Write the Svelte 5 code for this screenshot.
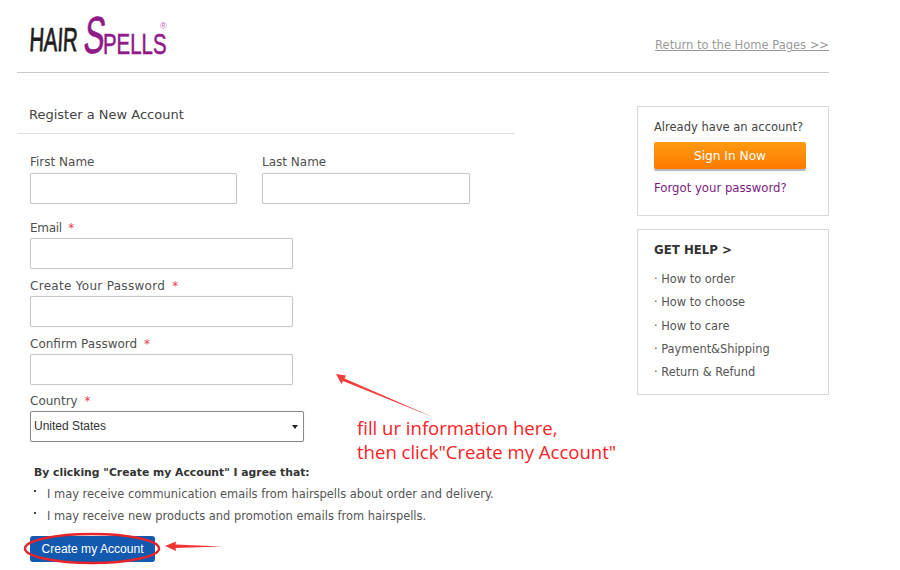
<script>
	const help = ['How to order', 'How to choose', 'How to care', 'Payment&Shipping', 'Return & Refund'];
	const agreements = [
		'I may receive communication emails from hairspells about order and delivery.',
		'I may receive new products and promotion emails from hairspells.'
	];
	const fields = [
		{ label: 'Email', spacing: 'tight' },
		{ label: 'Create Your Password', spacing: 'wide' },
		{ label: 'Confirm Password', spacing: '' }
	];
</script>

<div class="page">
	<header>
		<div class="logo" aria-label="HairSpells">
			<span class="hair">HAIR</span>
			<span class="big-s">S</span>
			<span class="pells">PELLS</span>
			<span class="reg">®</span>
		</div>
		<a href="#home" class="home">Return to the Home Pages &gt;&gt;</a>
	</header>

	<main>
		<section class="register">
			<h1>Register a New Account</h1>
			<form>
				<div class="names">
					<div>
						<label for="first">First Name</label>
						<input id="first" />
					</div>
					<div>
						<label for="last">Last Name</label>
						<input id="last" />
					</div>
				</div>
				{#each fields as f}
					<div class="field">
						<label for={f.label} class={f.spacing}>{f.label} <em>*</em></label>
						<input id={f.label} class="long" />
					</div>
				{/each}
				<div class="field country">
					<label for="country">Country <em>*</em></label>
					<div id="country" class="select">United States<span class="caret"></span></div>
				</div>
				<div class="agree">
					<strong>By clicking "Create my Account" I agree that:</strong>
					<ul>
						{#each agreements as a}
							<li>{a}</li>
						{/each}
					</ul>
				</div>
				<button type="button" class="create">Create my Account</button>
			</form>
		</section>

		<aside>
			<div class="box signin">
				<p>Already have an account?</p>
				<button type="button" class="orange">Sign In Now</button>
				<a href="#forgot">Forgot your password?</a>
			</div>
			<div class="box help">
				<h2>GET HELP &gt;</h2>
				<ul>
					{#each help as h}
						<li>· {h}</li>
					{/each}
				</ul>
			</div>
		</aside>
	</main>

	<div class="note">fill ur information here,<br />then click"Create my Account"</div>
	<svg class="marks" width="900" height="570" viewBox="0 0 900 570" aria-hidden="true">
		<path d="M336 374 L346 375.500 L344.500 378.500 L435 418 L343 381 L341.500 384 Z" fill="#f33c3c" />
		<path d="M165 546 L176 541.500 L175.500 544.500 L222 546.500 L175.500 548 L176 551 Z" fill="#f03434" />
		<ellipse cx="92" cy="548.500" rx="67" ry="14.500" fill="none" stroke="#e5242c" stroke-width="2.500" />
	</svg>
</div>

<style>
	:global(body) {
		margin: 0;
		background: #fff;
	}

	.page {
		position: relative;
		width: 900px;
		height: 570px;
		overflow: hidden;
		font-family: 'DejaVu Sans', Verdana, sans-serif;
		font-size: 12px;
		color: #4a4a4a;
		box-sizing: border-box;
		padding-left: 17px;
	}

	header {
		width: 812px;
		height: 73px;
		box-sizing: border-box;
		border-bottom: 1px solid #c9c9c9;
		display: flex;
		justify-content: space-between;
		padding-left: 12px;
	}

	.logo {
		position: relative;
		display: flex;
		align-items: flex-end;
		width: 142px;
		height: 56px;
		font-family: 'Liberation Sans', sans-serif;
		white-space: nowrap;
	}

	.logo span {
		display: block;
	}

	.hair {
		width: 53px;
		line-height: 24px;
		font-size: 33px;
		color: #1d1d1d;
		-webkit-text-stroke: 0.9px #1d1d1d;
		transform: scaleX(0.61) skewX(-5deg);
		transform-origin: left bottom;
		margin-bottom: 4px;
	}

	.big-s {
		width: 21px;
		line-height: 38px;
		font-size: 52px;
		color: #8f1a88;
		-webkit-text-stroke: 0.7px #8f1a88;
		transform: scaleX(0.6) skewX(-12deg);
		transform-origin: left bottom;
		margin-bottom: 2px;
	}

	.pells {
		width: 64px;
		line-height: 22px;
		font-size: 30px;
		color: #8f1a88;
		-webkit-text-stroke: 0.6px #8f1a88;
		transform: scaleX(0.68);
		transform-origin: left bottom;
		margin-bottom: 1px;
	}

	.reg {
		position: absolute;
		left: 131px;
		top: 21px;
		line-height: 10px;
		font-size: 9px;
		color: #c060b8;
	}

	.home {
		font-size: 11.500px;
		color: #9a9a9a;
		margin-top: 38px;
		height: 15px;
		line-height: 15px;
	}

	main {
		display: flex;
		justify-content: space-between;
		width: 812px;
		padding-top: 33px;
	}

	.register {
		width: 498px;
	}

	h1 {
		margin: 0;
		padding: 0 0 0 12px;
		height: 27px;
		line-height: 18px;
		font-size: 13px;
		font-weight: 400;
		color: #444;
		border-bottom: 1px solid #e0e0e0;
	}

	form {
		padding: 20px 0 0 13px;
	}

	.names {
		display: grid;
		grid-template-columns: 207px 208px;
		gap: 25px;
		margin-bottom: 16px;
	}

	.names label {
		height: 19px;
	}

	.names input {
		width: 100%;
	}

	label {
		display: block;
		height: 18px;
		line-height: 16px;
		font-size: 12px;
		color: #505050;
	}

	label.wide {
		letter-spacing: 0.3px;
	}

	label.tight {
		letter-spacing: -0.3px;
	}

	em {
		color: #e8404a;
		font-style: normal;
		margin-left: 3px;
	}

	input,
	.select {
		display: block;
		box-sizing: border-box;
		height: 31px;
		background: #fff;
		border: 1px solid #c8c8c8;
		border-radius: 2px;
		box-shadow: 0 0 1px #ccc;
		padding: 0;
	}

	.long {
		width: 263px;
	}

	.field {
		margin-bottom: 9px;
	}

	.country {
		margin-top: -1px;
		margin-bottom: 0;
	}

	.select {
		position: relative;
		width: 274px;
		border-color: #8a8a8a;
		font-family: 'Liberation Sans', Arial, sans-serif;
		font-size: 12px;
		line-height: 29px;
		padding-left: 3px;
		color: #333;
	}

	.caret {
		position: absolute;
		right: 5px;
		top: 13px;
		border: 3px solid transparent;
		border-top: 4px solid #222;
		border-bottom: 0;
	}

	.agree {
		padding: 24px 0 0 4px;
		font-size: 11.450px;
	}

	.agree strong {
		display: block;
		height: 17px;
		line-height: 14px;
		font-size: 10.800px;
		color: #333;
	}

	.agree ul {
		list-style: none;
		margin: 0;
		padding: 0;
	}

	.agree li {
		height: 22px;
		line-height: 22px;
		padding-left: 13px;
		position: relative;
		color: #555;
	}

	.agree li::before {
		content: '';
		position: absolute;
		left: 0;
		top: 7px;
		width: 2px;
		height: 2px;
		background: #444;
	}

	.create {
		display: block;
		margin-top: 9px;
		width: 125px;
		height: 26px;
		padding: 0;
		border: 0;
		border-radius: 3px;
		background: #1259b0;
		color: #fff;
		font-family: 'Liberation Sans', Arial, sans-serif;
		font-size: 12.100px;
	}

	aside {
		width: 192px;
		display: flex;
		flex-direction: column;
		gap: 13px;
	}

	.box {
		box-sizing: border-box;
		border: 1px solid #d9d9d9;
		padding-left: 16px;
	}

	.signin {
		height: 110px;
		padding-top: 13px;
		font-size: 11.500px;
	}

	.signin p {
		margin: 0 0 7px;
		height: 15px;
		line-height: 15px;
		color: #444;
	}

	.orange {
		display: block;
		width: 152px;
		height: 27px;
		padding: 0;
		border: 0;
		border-radius: 2px;
		background: linear-gradient(#ff9a10, #ff7a00);
		box-shadow: 0 2px 1px #b4b4c0;
		color: #fff;
		font-family: inherit;
		font-size: 12.200px;
		font-weight: 500;
	}

	.signin a {
		display: block;
		margin-top: 12px;
		font-size: 11.700px;
		color: #7d1a80;
		text-decoration: none;
		line-height: 15px;
	}

	.help {
		height: 166px;
		padding-top: 13px;
		font-size: 11.400px;
	}

	h2 {
		margin: 0 0 10px;
		font-size: 11.800px;
		line-height: 15px;
		color: #333;
	}

	.help ul {
		list-style: none;
		margin: 0;
		padding: 0;
	}

	.help li {
		height: 23.300px;
		line-height: 23px;
		color: #555;
	}

	.note {
		position: absolute;
		left: 357px;
		top: 416px;
		font-family: 'Open Sans', 'DejaVu Sans', sans-serif;
		font-size: 18.550px;
		line-height: 24px;
		color: #fb2226;
		white-space: nowrap;
	}

	.marks {
		position: absolute;
		left: 0;
		top: 0;
		pointer-events: none;
	}
</style>
